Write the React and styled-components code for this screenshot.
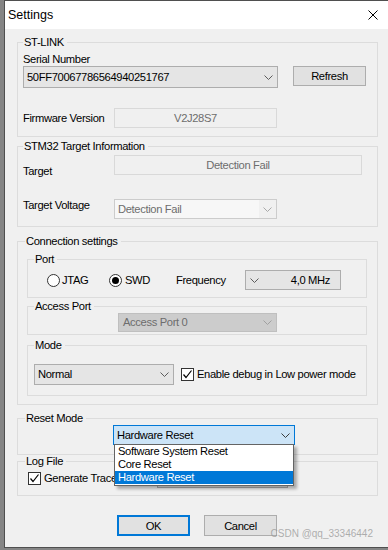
import React from "react";
import styled, {createGlobalStyle} from "styled-components";

const GlobalStyle = createGlobalStyle`
  html, body {
    margin: 0;
    padding: 0;
    background: #858585;
  }
  body {
    font-family: "Liberation Sans", Arial, sans-serif;
    font-size: 11.2px;
    letter-spacing: -0.35px;
    color: #000;
  }
`

const Window = styled.div`
  position: relative;
  box-sizing: border-box;
  margin-left: 4px;
  width: 384px;
  height: 548px;
  border: 1px solid #4f4f4f;
  border-right: none;
  background: #f0f0f0;
  display: flex;
  flex-direction: column;
  overflow: hidden;
`

const TitleBar = styled.div`
  height: 28px;
  flex: none;
  background: #fff;
  display: flex;
  align-items: center;
  justify-content: space-between;
  padding: 0 10px 0 3px;
`

const Title = styled.span`
  font-size: 12.5px;
  letter-spacing: 0;
`

const Body = styled.div`
  display: flex;
  flex-direction: column;
  padding: 0 10px 0 12px;
`

const Group = styled.fieldset`
  margin: ${(props) => props.$mt || 0}px 0 0;
  padding: ${(props) => props.$pt || 0}px ${(props) => props.$pr || 10}px ${(props) => props.$pb || 0}px ${(props) => props.$pl || 5}px;
  border: 1px solid #dcdcdc;
  min-width: 0;
  display: flex;
  flex-direction: column;
`

const Legend = styled.legend`
  line-height: 13px;
  padding: 0 3px 0 1px;
  margin-left: ${(props) => props.$ml || 0}px;
`

const Label = styled.div`
  line-height: 13px;
  white-space: nowrap;
`

const Row = styled.div`
  display: flex;
  align-items: ${(props) => props.$align || "flex-start"};
  gap: ${(props) => props.$gap || 0}px;
  margin-top: ${(props) => props.$mt || 0}px;
  padding-left: ${(props) => props.$pl || 0}px;
`

const FieldLabel = styled.div`
  width: ${(props) => props.$w}px;
  flex: none;
  line-height: 13px;
  margin-top: ${(props) => props.$mt || 0}px;
  white-space: nowrap;
`

const comboLook = {
  normal: {bg: "#e5e5e5", border: "#adadad", color: "#000", text: "#e5e5e5", chevron: "#5c5c5c"},
  disabled: {bg: "#f0f0f0", border: "#cccccc", color: "#6d6d6d", text: "#f7f7f7", chevron: "#a8a8a8"},
  grey: {bg: "#cccccc", border: "#bfbfbf", color: "#6d6d6d", text: "#cccccc", chevron: "#a0a0a0"},
  focused: {bg: "#cce4f7", border: "#0078d7", color: "#000", text: "#cce4f7", chevron: "#3c3c3c"},
};

const ComboBox = styled.div`
  position: relative;
  box-sizing: border-box;
  flex: none;
  width: ${(props) => props.$w}px;
  height: ${(props) => props.$h || 20}px;
  margin-left: ${(props) => props.$ml || 0}px;
  border: 1px solid ${(props) => comboLook[props.$look].border};
  background: ${(props) => comboLook[props.$look].bg};
  color: ${(props) => comboLook[props.$look].color};
  display: flex;
  flex-direction: ${(props) => (props.$reverse ? "row-reverse" : "row")};
  align-items: stretch;
`

const ComboText = styled.div`
  flex: 1;
  display: flex;
  align-items: center;
  justify-content: ${(props) => (props.$right ? "flex-end" : "flex-start")};
  padding: ${(props) => (props.$right ? "0 10px 0 0" : `0 0 0 ${props.$pad || 3}px`)};
  background: ${(props) => comboLook[props.$look].text};
  white-space: nowrap;
  line-height: 13px;
`

const ChevronBox = styled.div`
  width: 17px;
  flex: none;
  display: flex;
  align-items: center;
  justify-content: center;
`

const Field = styled.div`
  box-sizing: border-box;
  flex: none;
  width: ${(props) => props.$w}px;
  height: 20px;
  border: 1px solid #d9d9d9;
  background: #f0f0f0;
  color: #6d6d6d;
  display: flex;
  align-items: center;
  justify-content: center;
`

const Button = styled.div`
  box-sizing: border-box;
  flex: none;
  width: ${(props) => props.$w}px;
  height: ${(props) => props.$h || 20}px;
  margin-left: ${(props) => props.$ml || 0}px;
  margin-right: ${(props) => props.$mr || 0}px;
  border: ${(props) => (props.$default ? "2px solid #0078d7" : "1px solid #adadad")};
  background: #e1e1e1;
  display: flex;
  align-items: center;
  justify-content: center;
  white-space: nowrap;
`

const PortRow = styled.div`
  display: grid;
  grid-template-columns: 62px 67px 69px 96px;
  align-items: center;
  padding-left: 13px;
`

const Option = styled.div`
  display: flex;
  align-items: center;
  gap: ${(props) => props.$gap || 2}px;
`

const RadioCircle = styled.span`
  box-sizing: border-box;
  width: 13px;
  height: 13px;
  border-radius: 50%;
  border: 1px solid #333;
  background: #fff;
  display: flex;
  align-items: center;
  justify-content: center;
  &::after {
    content: "";
    width: 7px;
    height: 7px;
    border-radius: 50%;
    background: ${(props) => (props.$checked ? "#000" : "transparent")};
  }
`

const CheckBox = styled.span`
  box-sizing: border-box;
  flex: none;
  width: 13px;
  height: 13px;
  margin-left: ${(props) => props.$ml || 0}px;
  border: 1px solid #333;
  background: #fff;
  display: flex;
  align-items: center;
  justify-content: center;
`

const DropList = styled.div`
  position: absolute;
  top: 100%;
  left: 0;
  right: 0;
  z-index: 2;
  box-sizing: border-box;
  border: 1px solid #646464;
  background: #fff;
  box-shadow: 3px 3px 3px rgba(0, 0, 0, 0.3);
  padding: 0 0 1px;
`

const DropItem = styled.div`
  height: 13px;
  line-height: 13px;
  padding-left: 3px;
  background: ${(props) => (props.$active ? "#0078d7" : "#fff")};
  color: ${(props) => (props.$active ? "#fff" : "#000")};
  white-space: nowrap;
`

const Watermark = styled.div`
  position: absolute;
  right: 15px;
  bottom: 8px;
  font-size: 10px;
  letter-spacing: 0;
  color: rgba(150, 150, 150, 0.75);
  white-space: nowrap;
`

function Chevron({color}) {
  return (
    <svg width="9" height="5" viewBox="0 0 9 5">
      <polyline points="0.5,0.5 4.5,4.5 8.5,0.5" fill="none" stroke={color} strokeWidth="1" />
    </svg>
  );
}

function Combo({w, h, ml, look = "normal", reverse, right, pad, children}) {
  return (
    <ComboBox $w={w} $h={h} $ml={ml} $look={look} $reverse={reverse}>
      <ComboText $look={look} $right={right} $pad={pad}>{children}</ComboText>
      <ChevronBox><Chevron color={comboLook[look].chevron} /></ChevronBox>
    </ComboBox>
  );
}

function CheckMark() {
  return (
    <svg width="11" height="11" viewBox="0 0 11 11">
      <polyline points="1.5,5.5 4,8.5 9.5,1.5" fill="none" stroke="#000" strokeWidth="1.2" />
    </svg>
  );
}

function CloseIcon() {
  return (
    <svg width="10" height="10" viewBox="0 0 10 10">
      <path d="M0.5 0.5 L9.5 9.5 M9.5 0.5 L0.5 9.5" stroke="#000" strokeWidth="1" />
    </svg>
  );
}

export default function App() {
  return (
    <>
      <GlobalStyle />
      <Window>
        <TitleBar>
          <Title>Settings</Title>
          <CloseIcon />
        </TitleBar>
        <Body>
          <Group $mt={7} $pt={4} $pb={8}>
            <Legend>ST-LINK</Legend>
            <Label>Serial Number</Label>
            <Row $gap={15}>
              <Combo w={255} h={22}>50FF70067786564940251767</Combo>
              <Button $w={73}>Refresh</Button>
            </Row>
            <Row $mt={20} $align="center">
              <FieldLabel $w={91}>Firmware Version</FieldLabel>
              <Field $w={163}>V2J28S7</Field>
            </Row>
          </Group>

          <Group $mt={3} $pt={2} $pb={7}>
            <Legend>STM32 Target Information</Legend>
            <Row>
              <FieldLabel $w={91} $mt={10}>Target</FieldLabel>
              <Field $w={248}>Detection Fail</Field>
            </Row>
            <Row $mt={21}>
              <FieldLabel $w={91}>Target Voltage</FieldLabel>
              <Combo w={163} look="disabled">Detection Fail</Combo>
            </Row>
          </Group>

          <Group $mt={8} $pt={5} $pb={8} $pl={9}>
            <Legend $ml={-2}>Connection settings</Legend>
            <Group $pt={4} $pb={7} $pl={6} $pr={6}>
              <Legend>Port</Legend>
              <PortRow>
                <Option>
                  <RadioCircle />
                  <span>JTAG</span>
                </Option>
                <Option $gap={3}>
                  <RadioCircle $checked />
                  <span>SWD</span>
                </Option>
                <span>Frequency</span>
                <Combo w={96} reverse right>4,0 MHz</Combo>
              </PortRow>
            </Group>
            <Group $mt={2} $pb={2} $pl={6} $pr={6}>
              <Legend>Access Port</Legend>
              <Row>
                <Combo w={159} h={19} ml={84} look="grey" pad={4}>Access Port 0</Combo>
              </Row>
            </Group>
            <Group $mt={4} $pt={12} $pb={10} $pl={6} $pr={6}>
              <Legend>Mode</Legend>
              <Row $align="center">
                <Combo w={140} h={21}>Normal</Combo>
                <CheckBox $ml={7}><CheckMark /></CheckBox>
                <Label style={{marginLeft: 3}}>Enable debug in Low power mode</Label>
              </Row>
            </Group>
          </Group>

          <Group $mt={7} $pb={9}>
            <Legend $ml={2}>Reset Mode</Legend>
            <Row>
              <ComboBox $w={182} $h={20} $ml={90} $look="focused">
                <ComboText $look="focused" $pad={3}>Hardware Reset</ComboText>
                <ChevronBox><Chevron color={comboLook.focused.chevron} /></ChevronBox>
                <DropList>
                  <DropItem>Software System Reset</DropItem>
                  <DropItem>Core Reset</DropItem>
                  <DropItem $active>Hardware Reset</DropItem>
                </DropList>
              </ComboBox>
            </Row>
          </Group>

          <Group $pb={7}>
            <Legend $ml={2}>Log File</Legend>
            <Row $align="center">
              <CheckBox $ml={5}><CheckMark /></CheckBox>
              <Label style={{marginLeft: 3}}>Generate Trace Log File</Label>
              <Button $w={131} $ml="auto" $mr={9}>Open Containing Folder</Button>
            </Row>
          </Group>

          <Row $mt={19} $gap={14} $pl={100}>
            <Button $w={73} $h={21} $default>OK</Button>
            <Button $w={73} $h={21}>Cancel</Button>
          </Row>
        </Body>
        <Watermark>CSDN @qq_33346442</Watermark>
      </Window>
    </>
  );
}
